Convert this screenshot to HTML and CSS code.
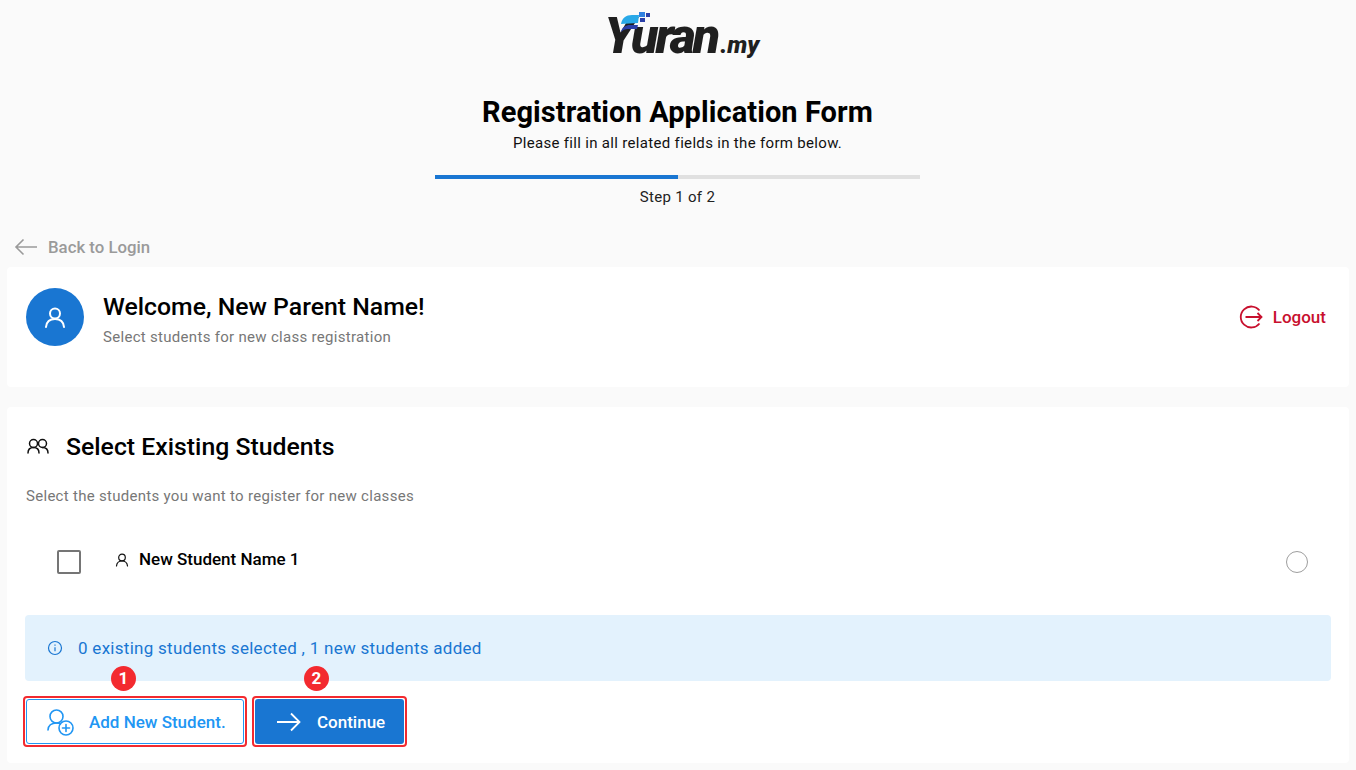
FILE: index.html
```html
<!DOCTYPE html>
<html lang="en">
<head>
    <meta charset="UTF-8">
    <meta name="viewport" content="width=device-width, initial-scale=1.0">
    <title>Registration Application Form</title>
    <link rel="stylesheet" href="styles.css">
</head>
<body>

<header class="page-header">
    <div class="logo">
        <span class="logo-name">Yuran</span><span class="logo-tld">.my</span>
        <svg class="logo-mark" width="36" height="26" viewBox="0 0 36 26">
            <path d="M3 14 C4 8 8 5 14 5 L21 5 L20 13 L3 14 Z" fill="#29a9e8"/>
            <path d="M3 22 C4 17 8 15 12 15 L20 15 L19 19 L10 19 C7 19 5 20 3 22 Z" fill="#2b3fa8"/>
            <rect x="21" y="2" width="6" height="5" fill="#2f80e0"/>
            <rect x="28" y="3" width="4" height="4" fill="#2b3fa8"/>
            <rect x="22" y="8" width="5" height="4" fill="#2b3fa8"/>
        </svg>
    </div>
    <h1>Registration Application Form</h1>
    <p class="subtitle">Please fill in all related fields in the form below.</p>
    <div class="progress"><div class="progress-fill"></div></div>
    <p class="step-label">Step 1 of 2</p>
</header>

<a class="back-link" href="#">
    <svg width="24" height="18" viewBox="0 0 24 18" fill="none" stroke="#9a9a9a" stroke-width="1.6">
        <path d="M23 9H2M9.500 1.500 2 9l7.500 7.500"/>
    </svg>
    Back to Login
</a>

<section class="card welcome-card">
    <div class="avatar">
        <svg width="24" height="24" viewBox="0 0 24 24" fill="none" stroke="#fff" stroke-width="2" stroke-linecap="round">
            <circle cx="12" cy="8.500" r="5"/>
            <path d="M3 22c.5-5 4-8 9-8s8.500 3 9 8"/>
        </svg>
    </div>
    <div class="welcome-text">
        <h2>Welcome, New Parent Name!</h2>
        <p>Select students for new class registration</p>
    </div>
    <a class="logout" href="#">
        <svg width="24" height="24" viewBox="0 0 24 24" fill="none" stroke="#c8102e" stroke-width="1.8">
            <path d="M20.500 5.500A10.500 10.500 0 1 0 20.500 18.500"/>
            <path d="M6.500 12H22.500M18.500 8l4 4-4 4"/>
        </svg>
        Logout
    </a>
</section>

<section class="card students-card">
    <div class="section-title">
        <svg width="24" height="16" viewBox="0 0 24 16" fill="none" stroke="#111" stroke-width="1.500" stroke-linecap="round">
            <circle cx="7.500" cy="5.500" r="4"/>
            <path d="M2 15c0-3.500 2-5.500 5.500-5.500S13 11.500 13 15"/>
            <circle cx="16.500" cy="5.500" r="4"/>
            <path d="M16.500 9.500c3.500 0 5.500 2 5.500 5.500"/>
        </svg>
        <h2>Select Existing Students</h2>
    </div>
    <p class="hint">Select the students you want to register for new classes</p>

    <div class="student-row">
        <span class="checkbox"></span>
        <svg class="student-icon" width="14" height="14" viewBox="0 0 14 14" fill="none" stroke="#111" stroke-width="1.2" stroke-linecap="round">
            <circle cx="7" cy="4.500" r="3.300"/>
            <path d="M1.500 13c.3-3 2.500-5 5.500-5s5.200 2 5.500 5"/>
        </svg>
        <span class="student-name">New Student Name 1</span>
        <span class="radio"></span>
    </div>

    <div class="info-box">
        <svg width="16" height="16" viewBox="0 0 16 16" fill="none" stroke="#1976d2" stroke-width="1.200">
            <circle cx="8" cy="8" r="6.500"/>
            <path d="M8 7.200v4M8 4.500v1.300"/>
        </svg>
        0 existing students selected , 1 new students added
    </div>

    <div class="actions">
        <div class="marked">
            <span class="badge badge-add">1</span>
            <button class="btn btn-outline">
                <svg width="30" height="30" viewBox="0 0 30 30" fill="none" stroke="#2196f3" stroke-width="1.600" stroke-linecap="round">
                    <circle cx="9.500" cy="9.500" r="6.500"/>
                    <path d="M1 23c.3-4.500 3.500-7 8.500-7 1.500 0 3 .3 4 .8"/>
                    <circle cx="19" cy="21" r="7"/>
                    <path d="M19 17.500v7M15.500 21h7"/>
                </svg>
                Add New Student.
            </button>
        </div>
        <div class="marked">
            <span class="badge badge-continue">2</span>
            <button class="btn btn-solid">
                <svg width="24" height="20" viewBox="0 0 24 20" fill="none" stroke="#fff" stroke-width="1.800">
                    <path d="M0 10h22.500M14 1.500l8.500 8.500-8.500 8.500"/>
                </svg>
                Continue
            </button>
        </div>
    </div>
</section>

</body>
</html>
```

FILE: styles.css
```css
* {
    box-sizing: border-box;
}
body {
    font-family: Roboto, Arial, sans-serif;
    margin: 0;
    padding: 0 7px;
    background-color: #fafafa;
    color: #000;
}
.page-header {
    display: flex;
    flex-direction: column;
    align-items: center;
    height: 232px;
    padding: 13px 1px 0 0;
}
.logo {
    position: relative;
    display: flex;
    align-items: baseline;
    height: 46px;
    margin-left: 9px;
    font-weight: 900;
    font-style: italic;
    color: #1f1f1f;
}
.logo-mark {
    position: absolute;
    left: 13px;
    top: -3px;
}
.logo-name {
    font-size: 50px;
    line-height: 46px;
    letter-spacing: -3px;
}
.logo-tld {
    font-size: 24px;
    margin-left: 3px;
}
h1 {
    margin: 35px 0 0;
    font-size: 29px;
    line-height: 36px;
    font-weight: 700;
    letter-spacing: 0.07px;
}
.subtitle {
    margin: 3px 0 0;
    font-size: 15px;
    line-height: 20px;
    letter-spacing: 0.32px;
    color: #111;
}
.progress {
    width: 485px;
    height: 4px;
    margin-top: 22px;
    background-color: #e0e0e0;
}
.progress-fill {
    width: 50%;
    height: 100%;
    background-color: #1976d2;
}
.step-label {
    margin: 8px 0 0;
    font-size: 15px;
    line-height: 20px;
    letter-spacing: 0.3px;
    color: #222;
}
.back-link {
    display: flex;
    align-items: center;
    gap: 10px;
    height: 30px;
    margin-bottom: 5px;
    font-size: 16.800px;
    font-weight: 500;
    color: #9a9a9a;
    text-decoration: none;
}
.back-link svg {
    margin-left: 7px;
}
.card {
    background-color: #fff;
    border-radius: 4px;
    padding: 0 19px;
}
.welcome-card {
    display: flex;
    align-items: flex-start;
    height: 120px;
    margin-bottom: 20px;
    padding-top: 21px;
}
.avatar {
    display: flex;
    align-items: center;
    justify-content: center;
    width: 58px;
    height: 58px;
    border-radius: 50%;
    background-color: #1976d2;
}
.welcome-text {
    flex: 1;
    margin-left: 19px;
}
.welcome-text h2 {
    margin: 0;
    font-size: 24.800px;
    line-height: 37px;
    font-weight: 500;
}
.welcome-text p {
    margin: 2px 0 0;
    font-size: 15px;
    line-height: 20px;
    letter-spacing: 0.3px;
    color: #777;
}
.logout {
    display: flex;
    align-items: center;
    gap: 10px;
    margin: 17px 4px 0 0;
    font-size: 17px;
    font-weight: 500;
    color: #c8102e;
    text-decoration: none;
}
.students-card {
    height: 356px;
    padding-top: 24px;
}
.section-title {
    display: flex;
    align-items: center;
    gap: 16px;
    height: 30px;
}
.section-title h2 {
    margin: 1px 0 0;
    font-size: 24.800px;
    line-height: 30px;
    font-weight: 500;
}
.hint {
    margin: 25px 0 0;
    font-size: 15px;
    line-height: 20px;
    letter-spacing: 0.29px;
    color: #777;
}
.student-row {
    display: flex;
    align-items: center;
    height: 44px;
    margin-top: 34px;
    padding: 0 22px 0 31px;
}
.checkbox {
    width: 24px;
    height: 24px;
    border: 2px solid #757575;
    border-radius: 2px;
}
.student-icon {
    margin: -4px 0 0 34px;
}
.student-name {
    flex: 1;
    margin: -7px 0 0 10px;
    font-size: 17px;
    font-weight: 500;
}
.radio {
    width: 22px;
    height: 22px;
    border: 1px solid #9e9e9e;
    border-radius: 50%;
}
.info-box {
    display: flex;
    align-items: center;
    gap: 15px;
    height: 66px;
    margin: 31px -1px 0;
    padding-left: 22px;
    background-color: #e3f2fd;
    border-radius: 4px;
    font-size: 17px;
    letter-spacing: 0.28px;
    color: #1976d2;
}
.actions {
    display: flex;
    gap: 5px;
    margin: 15px 0 0 -3px;
}
.marked {
    position: relative;
    padding: 1px;
    border: 2px solid #f32a2f;
    border-radius: 4px;
}
.badge {
    position: absolute;
    top: -32px;
    width: 25px;
    height: 25px;
    border-radius: 50%;
    background-color: #f32a2f;
    color: #fff;
    font-size: 17px;
    font-weight: 700;
    line-height: 25px;
    text-align: center;
}
.badge-add {
    left: 86px;
}
.badge-continue {
    left: 50px;
}
.btn {
    display: flex;
    align-items: center;
    height: 45px;
    border-radius: 3px;
    font-family: inherit;
    font-size: 17px;
    font-weight: 500;
}
.btn-outline {
    width: 218px;
    gap: 12px;
    padding: 0 0 0 20px;
    background-color: #fff;
    border: 1px solid #2196f3;
    color: #2196f3;
}
.btn-solid {
    width: 149px;
    gap: 16px;
    padding: 0 0 0 22px;
    background-color: #1976d2;
    border: none;
    color: #fff;
}
```
